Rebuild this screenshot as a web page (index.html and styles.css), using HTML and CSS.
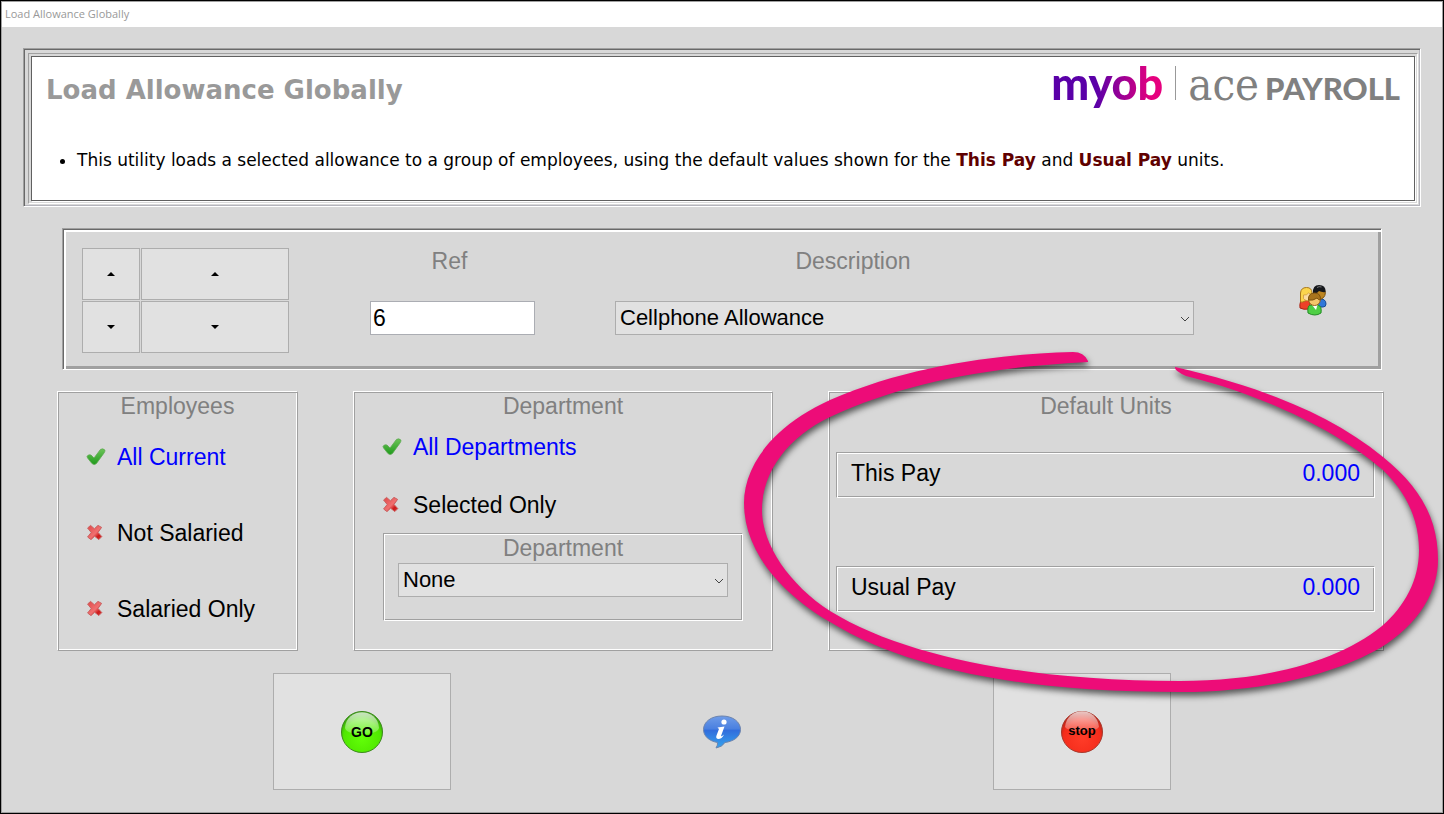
FILE: index.html
```
<!DOCTYPE html>
<html lang="en">
<head>
  <meta charset="UTF-8" />
  <meta name="viewport" content="width=device-width, initial-scale=1.0" />
  <title>Load Allowance Globally</title>
  <link rel="stylesheet" href="styles.css">
</head>
<body>

<!-- Shared icons -->
<svg class="icon-defs" width="0" height="0" aria-hidden="true">
  <defs>
    <linearGradient id="tickFill" x1="0" y1="0" x2="0" y2="1">
      <stop offset="0" stop-color="#6cc458" />
      <stop offset="1" stop-color="#1f9a1c" />
    </linearGradient>
    <linearGradient id="crossFill" x1="0" y1="0" x2="1" y2="1">
      <stop offset="0" stop-color="#e04848" />
      <stop offset="0.55" stop-color="#f07070" />
      <stop offset="0.75" stop-color="#cc1818" />
      <stop offset="1" stop-color="#d84040" />
    </linearGradient>
    <symbol id="tick" viewBox="0 0 20 20">
      <path d="M1 9.500 Q2 7 5 8 L8 11 L14.500 2.400 Q17 1 19 3.200 Q19 4.500 18 6 L10.500 16.400 Q8.500 18.600 6 16.600 L1.600 11 Z" fill="url(#tickFill)" stroke="#5da850" stroke-width="0.8" stroke-linejoin="round" />
    </symbol>
    <symbol id="cross" viewBox="0 0 20 20">
      <path d="M1.600 5 L4.600 2.400 L8.400 5.800 L12 2.400 L15.600 4.400 L12 9.400 L15.800 13.600 L12.800 16.600 L8.600 13.200 L5 16.600 L1.600 14 L5.200 9.500 Z" fill="url(#crossFill)" stroke="#c96060" stroke-width="1" stroke-linejoin="round" />
    </symbol>
  </defs>
</svg>

<div class="window">
  <header class="title-bar">Load Allowance Globally</header>

  <main class="content">
    <!-- Intro -->
    <section class="intro">
      <div class="intro-frame">
        <div class="intro-body">
          <div class="intro-top">
            <h1>Load Allowance Globally</h1>
            <div class="logo">
              <span class="logo-myob">myob</span>
              <span class="logo-line"></span>
              <span class="logo-ace">ace</span>
              <span class="logo-payroll">PAYROLL</span>
            </div>
          </div>
          <ul class="notes">
            <li>This utility loads a selected allowance to a group of employees, using the default values shown for the <strong>This Pay</strong> and <strong>Usual Pay</strong> units.</li>
          </ul>
        </div>
      </div>
    </section>

    <!-- Allowance picker -->
    <section class="picker">
      <div class="steppers">
        <button type="button" aria-label="Previous"><span class="arrow-up"></span></button>
        <button type="button" aria-label="Previous page"><span class="arrow-up"></span></button>
        <button type="button" aria-label="Next"><span class="arrow-down"></span></button>
        <button type="button" aria-label="Next page"><span class="arrow-down"></span></button>
      </div>
      <div class="field field-ref">
        <label for="ref">Ref</label>
        <input type="text" id="ref" value="6">
      </div>
      <div class="field field-description">
        <label for="description">Description</label>
        <div class="select-wrap">
          <select id="description">
            <option>Cellphone Allowance</option>
          </select>
          <svg class="chevron" viewBox="0 0 10 6"><path d="M1 1 L5 5 L9 1" /></svg>
        </div>
      </div>
      <svg class="people" viewBox="0 0 28 32" aria-hidden="true">
        <path d="M19 15 Q27 14 27 20 Q27 23 24 23 H18 Z" fill="#2f77d8" stroke="#174a94" />
        <ellipse cx="20.5" cy="9" rx="5.8" ry="6.3" fill="#bd851f" stroke="#76500c" />
        <path d="M14 9 Q13.500 1 20 1 Q27 1 26.500 8 Q23 8.500 20 7 Q18 10 14 9 Z" fill="#15171b" />
        <path d="M18 3.500 Q20 2 22.500 3" stroke="#777" fill="none" />
        <path d="M1 24 Q0 16 5 16 L11 17 L11 25 Q4 26 1 24 Z" fill="#ee4128" stroke="#a92315" />
        <path d="M1.500 18 V9 Q2 3.500 7.500 3.500 Q13 3.500 13 9 V15 L6 17 Q4 18.500 1.500 18 Z" fill="#fbd54d" stroke="#a9781c" />
        <path d="M4.500 11 Q8 11.500 9.500 9 L12.500 10.500 V16 Q7 18 4.500 14.500 Z" fill="#fcdca0" stroke="#c08a30" stroke-width="0.6" />
        <path d="M9 29 Q8 21 12 21 H19 Q23 22 22 29 Q16 33 9 29 Z" fill="#4fcf45" stroke="#218c24" />
        <path d="M13 21 L17 26 L18.500 21 Z" fill="#fff" />
        <ellipse cx="15.500" cy="16" rx="5.800" ry="5.500" fill="#f6c66b" stroke="#94651a" />
        <path d="M9.500 16 Q9 9 15.500 9 Q22 9 21.500 16 Q19 16 18 14 Q14 17 9.500 16 Z" fill="#a8741c" stroke="#7e520e" />
      </svg>
    </section>

    <!-- Filters and units -->
    <div class="panels">
      <section class="panel employees">
        <h2>Employees</h2>
        <div class="options">
          <label class="option"><input type="radio" name="employees" checked><svg class="mark on"><use href="#tick" /></svg><svg class="mark off"><use href="#cross" /></svg><span>All Current</span></label>
          <label class="option"><input type="radio" name="employees"><svg class="mark on"><use href="#tick" /></svg><svg class="mark off"><use href="#cross" /></svg><span>Not Salaried</span></label>
          <label class="option"><input type="radio" name="employees"><svg class="mark on"><use href="#tick" /></svg><svg class="mark off"><use href="#cross" /></svg><span>Salaried Only</span></label>
        </div>
      </section>

      <section class="panel department">
        <h2>Department</h2>
        <div class="options">
          <label class="option"><input type="radio" name="department" checked><svg class="mark on"><use href="#tick" /></svg><svg class="mark off"><use href="#cross" /></svg><span>All Departments</span></label>
          <label class="option"><input type="radio" name="department"><svg class="mark on"><use href="#tick" /></svg><svg class="mark off"><use href="#cross" /></svg><span>Selected Only</span></label>
        </div>
        <div class="sunken department-picker">
          <label for="departmentName">Department</label>
          <div class="select-wrap">
            <select id="departmentName">
              <option>None</option>
            </select>
            <svg class="chevron" viewBox="0 0 10 6"><path d="M1 1 L5 5 L9 1" /></svg>
          </div>
        </div>
      </section>

      <section class="panel units">
        <h2>Default Units</h2>
        <div class="unit-rows">
          <div class="sunken unit">
            <label for="thisPay">This Pay</label>
            <input type="text" id="thisPay" value="0.000">
          </div>
          <div class="sunken unit">
            <label for="usualPay">Usual Pay</label>
            <input type="text" id="usualPay" value="0.000">
          </div>
        </div>
        <!-- Hand drawn highlight -->
        <svg class="highlight" viewBox="735 345 709 360" aria-hidden="true">
          <path d="M1088 361 Q1084 352 1073 352 C1000 354 910 365 830 400 C770 427 744 468 744 503 C744 548 776 590 830 622 C915 674 1040 692 1180 692 C1265 692 1335 674 1380 648 C1420 624 1438 590 1438 560 C1438 518 1420 487 1383 457 C1330 413 1255 385 1175 367 Q1174 371 1186 376 C1262 395 1335 429 1383 470 C1408 494 1419 522 1419 550 C1419 580 1405 606 1382 626 C1340 660 1270 681 1180 681 C1040 681 910 660 830 611 C790 585 762 545 762 510 C762 470 790 436 830 417 C905 382 990 367 1088 362 Z" />
        </svg>
      </section>
    </div>

    <!-- Actions -->
    <div class="actions">
      <button type="button" class="action">
        <svg class="ball" viewBox="0 0 44 44">
          <defs>
            <radialGradient id="goFill" cx="0.5" cy="0.65" r="0.6">
              <stop offset="0" stop-color="#62ff08" />
              <stop offset="0.75" stop-color="#50e800" />
              <stop offset="1" stop-color="#35a00a" />
            </radialGradient>
            <linearGradient id="shine" x1="0" y1="0" x2="0" y2="1">
              <stop offset="0" stop-color="#fff" stop-opacity="0.75" />
              <stop offset="1" stop-color="#fff" stop-opacity="0.2" />
            </linearGradient>
          </defs>
          <circle cx="22" cy="22" r="20.500" fill="url(#goFill)" stroke="#3c8a1c" />
          <path d="M5 18 C6 -3 38 -3 39 18 Q37 24 22 24 Q7 24 5 18 Z" fill="url(#shine)" />
          <text x="22" y="27" class="ball-go">GO</text>
        </svg>
      </button>
      <button type="button" class="info" aria-label="Information">
        <svg viewBox="0 0 40 36">
          <defs>
            <linearGradient id="infoFill" x1="0" y1="0" x2="0" y2="1">
              <stop offset="0" stop-color="#6f9ce8" />
              <stop offset="0.4" stop-color="#4a80e0" />
              <stop offset="0.45" stop-color="#316ddc" />
              <stop offset="1" stop-color="#35a4ee" />
            </linearGradient>
          </defs>
          <path d="M20 2 C31 2 38.500 8 38.500 15.500 C38.500 23 31 27.500 23 28.500 Q20 33 14 34 Q16 31 15.500 28.500 C7 27 1.500 22 1.500 15.500 C1.500 8 9 2 20 2 Z" fill="url(#infoFill)" stroke="#6d84ad" />
          <circle cx="22" cy="8" r="2.600" fill="#fff" />
          <path d="M15.500 13.500 L22.500 12.500 L19 22 Q19.500 23 22 20.500 Q20 25 16 25 Q13.500 24.500 14.500 21.500 L17 15 Z" fill="#fff" />
        </svg>
      </button>
      <button type="button" class="action">
        <svg class="ball" viewBox="0 0 44 44">
          <defs>
            <radialGradient id="stopFill" cx="0.5" cy="0.65" r="0.6">
              <stop offset="0" stop-color="#ff3c28" />
              <stop offset="0.75" stop-color="#f52d1c" />
              <stop offset="1" stop-color="#b82418" />
            </radialGradient>
          </defs>
          <circle cx="22" cy="22" r="20.500" fill="url(#stopFill)" stroke="#a8382c" />
          <path d="M5 17 C7 -4 37 -4 39 17 Q37 21 22 21 Q7 21 5 17 Z" fill="url(#shine)" />
          <text x="22" y="25" class="ball-stop">stop</text>
        </svg>
      </button>
    </div>
  </main>
</div>

</body>
</html>
```
FILE: styles.css
```
* {
  box-sizing: border-box;
}

body {
  font-family: "Liberation Sans", Arial, sans-serif;
  font-size: 23px;
  line-height: 28px;
  background-color: #d8d8d8;
  color: #000;
  margin: 0;
}

h1, h2, ul {
  margin: 0;
  padding: 0;
}

button, input, select {
  font: inherit;
  color: inherit;
  margin: 0;
  border-radius: 0;
}

.icon-defs {
  position: absolute;
}

.window {
  display: flex;
  flex-direction: column;
  min-height: 100vh;
  border: 1px solid #000;
  box-shadow: inset 1px 1px #a0a0a0, inset -1px -1px #a0a0a0;
  padding: 1px;
}

.title-bar {
  background: white;
  color: #999;
  font-family: "Open Sans", "Segoe UI", sans-serif;
  font-size: 11px;
  line-height: 24px;
  padding: 0 0 1px 3px;
}

.content {
  padding: 21px 21px 20px;
}

/* Intro */
.intro {
  border: 1px solid;
  border-color: #a0a0a0 #fff #fff #a0a0a0;
  box-shadow: inset 1px 1px #696969, inset -1px -1px #b4b4bc;
  padding: 4px 2px 2px 4px;
}

.intro-frame {
  border: 1px solid;
  border-color: #a0a0a0 #fff #fff #a0a0a0;
  padding: 2px;
}

.intro-body {
  background: white;
  border: 1px solid #606060;
  box-shadow: 1px 1px #fff;
  padding: 0 14px 28px;
  font-family: "DejaVu Sans", Verdana, sans-serif;
}

.intro-top {
  display: flex;
  justify-content: space-between;
  align-items: center;
  height: 66px;
}

.intro-top h1 {
  color: #999;
  font-size: 26px;
}

.logo {
  display: flex;
  align-items: baseline;
  color: #808080;
  line-height: 56px;
  margin-bottom: 10px;
}

.logo-myob {
  font-family: Lato, sans-serif;
  font-weight: 900;
  font-size: 45px;
  background: linear-gradient(90deg, #5a00a8 40%, #e6007e 90%);
  background-clip: text;
  -webkit-background-clip: text;
  color: transparent;
}

.logo-line {
  width: 1px;
  height: 34px;
  background: #999;
  margin: 0 12px;
}

.logo-ace {
  font-family: "DejaVu Serif Condensed", "DejaVu Serif", serif;
  font-size: 45px;
}

.logo-payroll {
  font-family: Lato, sans-serif;
  font-weight: 900;
  font-size: 31px;
  margin-left: 6px;
}

.notes {
  font-size: 17px;
  line-height: 24px;
  padding: 25px 0 0 31px;
}

.notes strong {
  color: #600000;
}

/* Allowance picker */
.picker {
  display: flex;
  align-items: flex-start;
  border: 1px solid;
  border-color: #a0a0a0 #fff #fff #a0a0a0;
  box-shadow: inset 1px 1px #696969, inset 3px 3px #fff, inset -3px -3px #a0a0a0;
  margin: 21px 39px 0;
  padding: 19px 54px 16px 19px;
}

.steppers {
  display: grid;
  grid-template-columns: 58px 148px;
  grid-auto-rows: 52px;
  gap: 1px;
}

.steppers button,
.action {
  display: flex;
  align-items: center;
  justify-content: center;
  background: #e1e1e1;
  border: 1px solid #adadad;
  padding: 0;
}

.arrow-up,
.arrow-down {
  border-left: 4px solid transparent;
  border-right: 4px solid transparent;
}

.arrow-up {
  border-bottom: 4px solid #000;
}

.arrow-down {
  border-top: 4px solid #000;
}

.field {
  display: flex;
  flex-direction: column;
}

.field label {
  color: #808080;
  line-height: 26px;
  text-align: center;
  margin-bottom: 27px;
}

.field input {
  height: 34px;
  width: 100%;
  background: white;
  border: 1px solid #abadb3;
  padding: 0 2px;
}

.field-ref {
  width: 165px;
  margin-left: 81px;
}

.field-ref label {
  padding-right: 6px;
}

.field-description {
  flex: 1;
  margin: 0 105px 0 80px;
}

.field-description label {
  padding-right: 103px;
}

.select-wrap {
  position: relative;
}

.select-wrap select {
  appearance: none;
  display: block;
  width: 100%;
  height: 34px;
  background: #e1e1e1;
  border: 1px solid #adadad;
  font-size: 22px;
  padding: 0 24px 0 4px;
}

.chevron {
  position: absolute;
  right: 4px;
  top: 15px;
  width: 10px;
  height: 6px;
  fill: none;
  stroke: #444;
  pointer-events: none;
}

.people {
  width: 28px;
  height: 32px;
  margin-top: 36px;
}

/* Panels */
.panels {
  display: grid;
  grid-template-columns: 241fr 420fr 556fr;
  gap: 55px;
  margin: 21px 37px 0 34px;
}

.panel {
  position: relative;
  min-height: 260px;
  border: 1px solid;
  border-color: #fff #a0a0a0 #a0a0a0 #fff;
  box-shadow: inset 1px 1px #a0a0a0, inset -1px -1px #fff;
}

.panel h2,
.department-picker label {
  display: block;
  color: #808080;
  font-size: 23px;
  font-weight: normal;
  text-align: center;
}

.sunken {
  border: 1px solid;
  border-color: #a0a0a0 #fff #fff #a0a0a0;
  box-shadow: inset 1px 1px #fff, inset -1px -1px #a0a0a0;
}

.options {
  display: flex;
  flex-direction: column;
  align-items: flex-start;
  padding-left: 28px;
}

.employees .options {
  gap: 48px;
  padding-top: 23px;
}

.department .options {
  gap: 30px;
  padding-top: 13px;
}

.option {
  position: relative;
  display: flex;
  align-items: center;
  gap: 11px;
}

.option input {
  position: absolute;
  opacity: 0;
}

.mark {
  width: 20px;
  height: 20px;
}

.mark.on {
  display: none;
}

.option input:checked ~ .on {
  display: block;
}

.option input:checked ~ .off {
  display: none;
}

.option input:checked ~ span {
  color: #0000ff;
}

.department-picker {
  margin: 14px 29px 0;
  padding: 0 14px 23px;
}

.department-picker label {
  margin-bottom: 1px;
}

.unit-rows {
  display: flex;
  flex-direction: column;
  gap: 68px;
  padding: 32px 8px 0 7px;
}

.unit {
  display: flex;
  align-items: center;
  justify-content: space-between;
  height: 46px;
  padding: 0 14px 4px;
}

.unit input {
  width: 120px;
  background: none;
  border: none;
  color: #0000ff;
  padding: 0;
  text-align: right;
}

.highlight {
  position: absolute;
  left: -94px;
  top: -47px;
  width: 709px;
  height: 360px;
  fill: #ed0c78;
  filter: drop-shadow(1px 4px 3px rgba(0,0,0,0.6));
  pointer-events: none;
  z-index: 1;
}

/* Actions */
.actions {
  display: grid;
  grid-template-columns: repeat(3, 1fr);
  align-items: center;
  justify-items: center;
  margin: 22px 159px 0;
}

.action {
  width: 178px;
  height: 117px;
}

.ball {
  width: 44px;
  height: 44px;
}

.ball text {
  font-weight: bold;
  text-anchor: middle;
}

.ball .ball-go {
  font-size: 14px;
}

.ball .ball-stop {
  font-size: 13px;
}

.info {
  background: none;
  border: none;
  padding: 0;
}

.info svg {
  display: block;
  width: 40px;
  height: 36px;
}
```
